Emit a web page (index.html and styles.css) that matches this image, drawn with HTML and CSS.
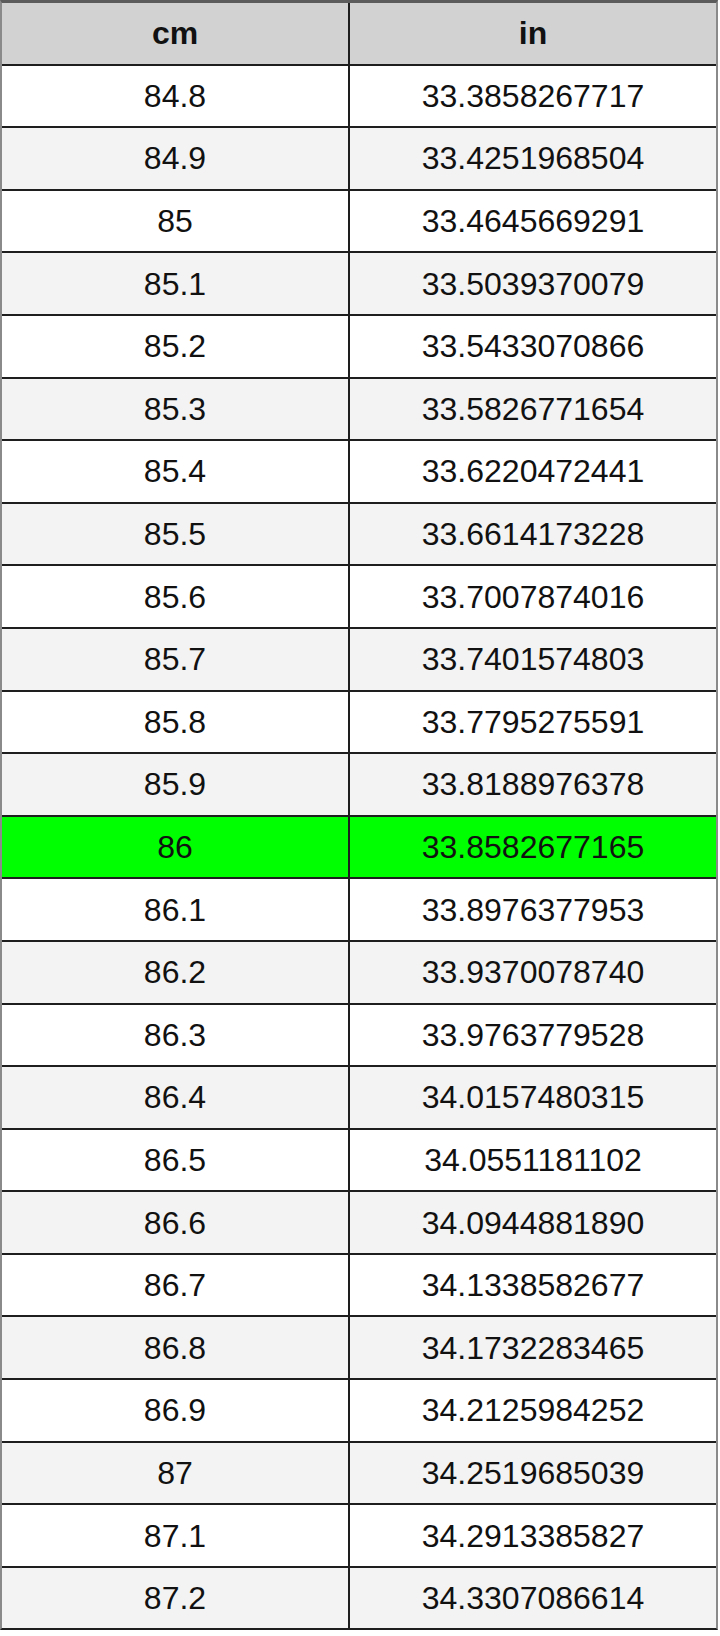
FILE: index.html
```html
<!DOCTYPE html>
<html>
<head>
<meta charset="utf-8">
<link rel="stylesheet" href="styles.css">
</head>
<body>
<div class="table">
  <div class="row head"><div class="cell">cm</div><div class="cell">in</div></div>
  <div class="row"><div class="cell">84.8</div><div class="cell">33.3858267717</div></div>
  <div class="row alt"><div class="cell">84.9</div><div class="cell">33.4251968504</div></div>
  <div class="row"><div class="cell">85</div><div class="cell">33.4645669291</div></div>
  <div class="row alt"><div class="cell">85.1</div><div class="cell">33.5039370079</div></div>
  <div class="row"><div class="cell">85.2</div><div class="cell">33.5433070866</div></div>
  <div class="row alt"><div class="cell">85.3</div><div class="cell">33.5826771654</div></div>
  <div class="row"><div class="cell">85.4</div><div class="cell">33.6220472441</div></div>
  <div class="row alt"><div class="cell">85.5</div><div class="cell">33.6614173228</div></div>
  <div class="row"><div class="cell">85.6</div><div class="cell">33.7007874016</div></div>
  <div class="row alt"><div class="cell">85.7</div><div class="cell">33.7401574803</div></div>
  <div class="row"><div class="cell">85.8</div><div class="cell">33.7795275591</div></div>
  <div class="row alt"><div class="cell">85.9</div><div class="cell">33.8188976378</div></div>
  <div class="row hl"><div class="cell">86</div><div class="cell">33.8582677165</div></div>
  <div class="row"><div class="cell">86.1</div><div class="cell">33.8976377953</div></div>
  <div class="row alt"><div class="cell">86.2</div><div class="cell">33.9370078740</div></div>
  <div class="row"><div class="cell">86.3</div><div class="cell">33.9763779528</div></div>
  <div class="row alt"><div class="cell">86.4</div><div class="cell">34.0157480315</div></div>
  <div class="row"><div class="cell">86.5</div><div class="cell">34.0551181102</div></div>
  <div class="row alt"><div class="cell">86.6</div><div class="cell">34.0944881890</div></div>
  <div class="row"><div class="cell">86.7</div><div class="cell">34.1338582677</div></div>
  <div class="row alt"><div class="cell">86.8</div><div class="cell">34.1732283465</div></div>
  <div class="row"><div class="cell">86.9</div><div class="cell">34.2125984252</div></div>
  <div class="row alt"><div class="cell">87</div><div class="cell">34.2519685039</div></div>
  <div class="row"><div class="cell">87.1</div><div class="cell">34.2913385827</div></div>
  <div class="row alt"><div class="cell">87.2</div><div class="cell">34.3307086614</div></div>
</div>
</body>
</html>
```
FILE: styles.css
```css
html, body {
  margin: 0;
  padding: 0;
  background: #ffffff;
}
body {
  font-family: "Liberation Sans", Arial, sans-serif;
  color: #111111;
}
.table {
  box-sizing: border-box;
  width: 718px;
  border-top: 3px solid #5c5c5c;
  border-left: 2px solid #8a8a8a;
  border-right: 2px solid #8a8a8a;
  border-bottom: 2px solid #1e1e1e;
}
.row {
  display: grid;
  grid-template-columns: 348px 1fr;
  height: 60.6px;
  border-bottom: 2px solid #1e1e1e;
  background: #ffffff;
}
.row:last-child {
  border-bottom: none;
}
.row.alt {
  background: #f3f3f3;
}
.row.head {
  background: #d2d2d2;
  font-weight: bold;
}
.row.hl {
  background: #00ff00;
}
.cell {
  display: flex;
  align-items: center;
  justify-content: center;
  font-size: 32px;
  line-height: 1;
}
.cell:first-child {
  border-right: 2px solid #1e1e1e;
}
```
